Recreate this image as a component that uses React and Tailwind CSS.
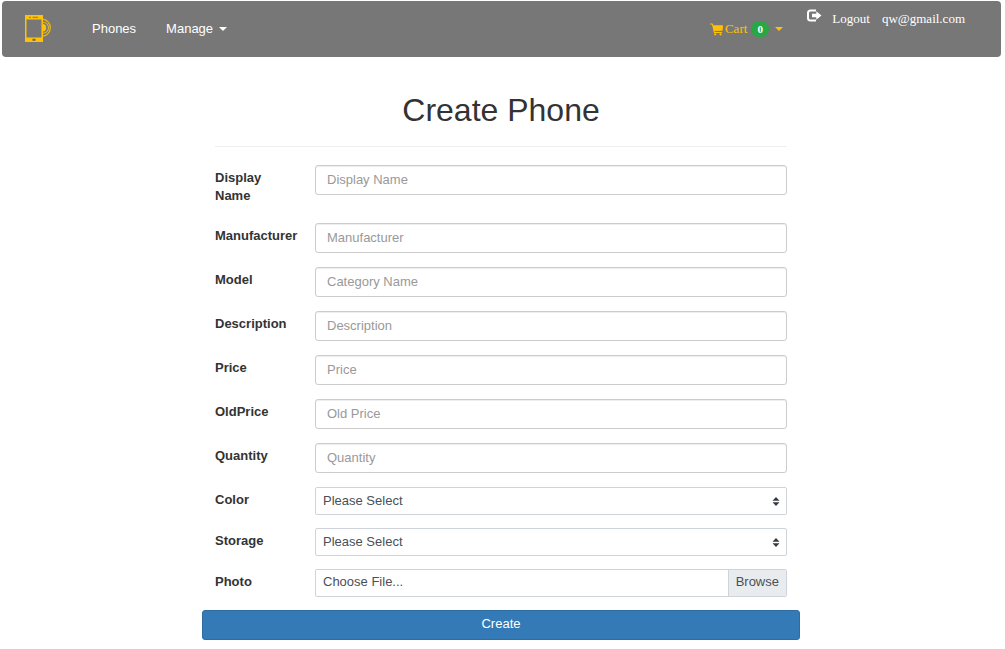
import React from "react";

const textFields = [
  { id: "displayName", label: "Display Name", placeholder: "Display Name" },
  { id: "manufacturer", label: "Manufacturer", placeholder: "Manufacturer" },
  { id: "model", label: "Model", placeholder: "Category Name" },
  { id: "description", label: "Description", placeholder: "Description" },
  { id: "price", label: "Price", placeholder: "Price" },
  { id: "oldPrice", label: "OldPrice", placeholder: "Old Price" },
  { id: "quantity", label: "Quantity", placeholder: "Quantity" },
];

const selectFields = [
  { id: "color", label: "Color" },
  { id: "storage", label: "Storage" },
];

function PhoneLogo() {
  return (
    <svg width="28" height="28" viewBox="0 0 28 28" aria-hidden="true">
      <path fill="#ffc107" fillRule="evenodd" d="M0 0H18V27H0ZM1.5 4.5V22.5H16.5V4.5Z" />
      <path stroke="#8a7a45" strokeWidth="1" d="M4 2.3H6M7.5 2.3H13" />
      <rect x="7.5" y="23.8" width="3" height="2" fill="#6b6550" />
      <path fill="#ffc107" d="M17.5 9A3.7 3.7 0 0 1 17.5 16.4Z" />
      <g fill="none" stroke="#ffc107" opacity="0.85">
        <path strokeWidth="1.1" d="M18 7.2A5.5 5.5 0 0 1 18 18.2" />
        <path strokeWidth="1.3" d="M18 4.2A8.6 8.6 0 0 1 18 21.2" />
      </g>
    </svg>
  );
}

function CartIcon() {
  return (
    <svg width="13" height="13" viewBox="0 0 13 13" fill="currentColor" aria-hidden="true">
      <path d="M0 1.1Q0 .6.5.6H2.4Q2.8.6 2.9 1L3.2 2.2H12.5Q13 2.2 13 2.8L12.6 7.2Q12.5 7.7 12 7.7L4.6 8L4.8 8.9H11.6Q12.1 8.9 12.1 9.4Q12.1 9.9 11.6 9.9H4.3Q3.9 9.9 3.8 9.4L2 1.6H.5Q0 1.6 0 1.1Z" />
      <circle cx="5.2" cy="11.3" r="1.1" />
      <circle cx="10.6" cy="11.3" r="1.1" />
    </svg>
  );
}

function LogoutIcon() {
  return (
    <svg width="15" height="13" viewBox="0 0 15 13" aria-hidden="true">
      <path fill="none" stroke="currentColor" strokeWidth="2" d="M9 1.5H3.5Q1 1.5 1 4V9Q1 11.5 3.5 11.5H9" />
      <path fill="currentColor" d="M5 4.8H9.3V2.3L14.5 6.5L9.3 10.7V8.2H5Z" />
    </svg>
  );
}

function Caret() {
  return (
    <svg width="8" height="4" viewBox="0 0 8 4" fill="currentColor" aria-hidden="true">
      <path d="M0 0H8L4 4Z" />
    </svg>
  );
}

function FieldRow({ id, label, children }) {
  return (
    <div className="flex items-start">
      <label htmlFor={id} className="w-[100px] shrink-0 py-1 pr-4 font-bold leading-[18px]">
        {label}
      </label>
      <div className="relative min-w-0 flex-1">{children}</div>
    </div>
  );
}

export default function App() {
  return (
    <div className="bg-white pt-px pr-1 pb-2 pl-0.5 font-['Liberation_Sans',Arial,sans-serif] text-[13px] text-[#333333]">
      <nav className="flex h-14 items-center rounded bg-[#777777] pr-9 pl-[23px] text-white">
        <a href="#home" aria-label="Home" className="mr-[39px] shrink-0">
          <PhoneLogo />
        </a>
        <a href="#phones" className="mr-[30px]">Phones</a>
        <button type="button" className="flex items-center gap-1.5">
          Manage <Caret />
        </button>
        <div className="ml-auto flex items-center self-stretch font-['Liberation_Serif','Times_New_Roman',serif]">
          <button type="button" className="mr-6 flex items-center text-[#ffc107]">
            <CartIcon />
            <span className="mr-1 ml-0.5">Cart</span>
            <span className="mr-1.5 flex h-4 w-[18px] items-center justify-center rounded-full bg-[#28a745] text-[11px] font-bold text-white">0</span>
            <Caret />
          </button>
          <div className="flex items-center self-start pt-2">
            <a href="#logout" className="mr-3 flex items-start gap-2.5">
              <LogoutIcon />
              Logout
            </a>
            <a href="#account">qw@gmail.com</a>
          </div>
        </div>
      </nav>

      <main className="mx-auto max-w-[599px] pr-px">
        <form onSubmit={(e) => e.preventDefault()}>
          <div className="px-[13px]">
            <h1 className="border-b border-[#eeeeee] pt-[35px] pb-[18px] text-center text-[32px] leading-9">Create Phone</h1>
            <div className="flex flex-col gap-3.5 pt-[18px]">
              {textFields.map((field) => (
                <FieldRow key={field.id} id={field.id} label={field.label}>
                  <input
                    id={field.id}
                    type="text"
                    placeholder={field.placeholder}
                    className="block h-[30px] w-full rounded-[3px] border border-[#cccccc] bg-white px-[11px] pb-0.5 shadow-[inset_0_1px_1px_rgba(0,0,0,0.075)] placeholder:text-[#999999]"
                  />
                </FieldRow>
              ))}
            </div>
            <div className="flex flex-col gap-[13px] pt-3.5 pb-[13px]">
              {selectFields.map((field) => (
                <FieldRow key={field.id} id={field.id} label={field.label}>
                  <select
                    id={field.id}
                    className="block h-7 w-full appearance-none rounded-[2px] border border-[#ced4da] bg-white px-[7px] text-[#495057]"
                  >
                    <option>Please Select</option>
                  </select>
                  <svg className="pointer-events-none absolute top-2.5 right-[7px]" width="8" height="9" viewBox="0 0 8 9" fill="#343a40" aria-hidden="true">
                    <path d="M.5 3.8L4 0L7.5 3.8ZM.5 5.2H7.5L4 9Z" />
                  </svg>
                </FieldRow>
              ))}
              <FieldRow id="photo" label="Photo">
                <input id="photo" type="file" className="peer sr-only" />
                <label
                  htmlFor="photo"
                  className="flex h-7 overflow-hidden rounded-[2px] border border-[#ced4da] leading-6 text-[#495057] peer-focus:border-[#80bdff]"
                >
                  <span className="flex-1 px-[7px]">Choose File...</span>
                  <span className="border-l border-[#ced4da] bg-[#e9ecef] px-[7px]">Browse</span>
                </label>
              </FieldRow>
            </div>
          </div>
          <button type="submit" className="block h-[30px] w-full rounded-[3px] border border-[#2e6da4] bg-[#337ab7] pb-0.5 text-white">
            Create
          </button>
        </form>
      </main>
    </div>
  );
}
